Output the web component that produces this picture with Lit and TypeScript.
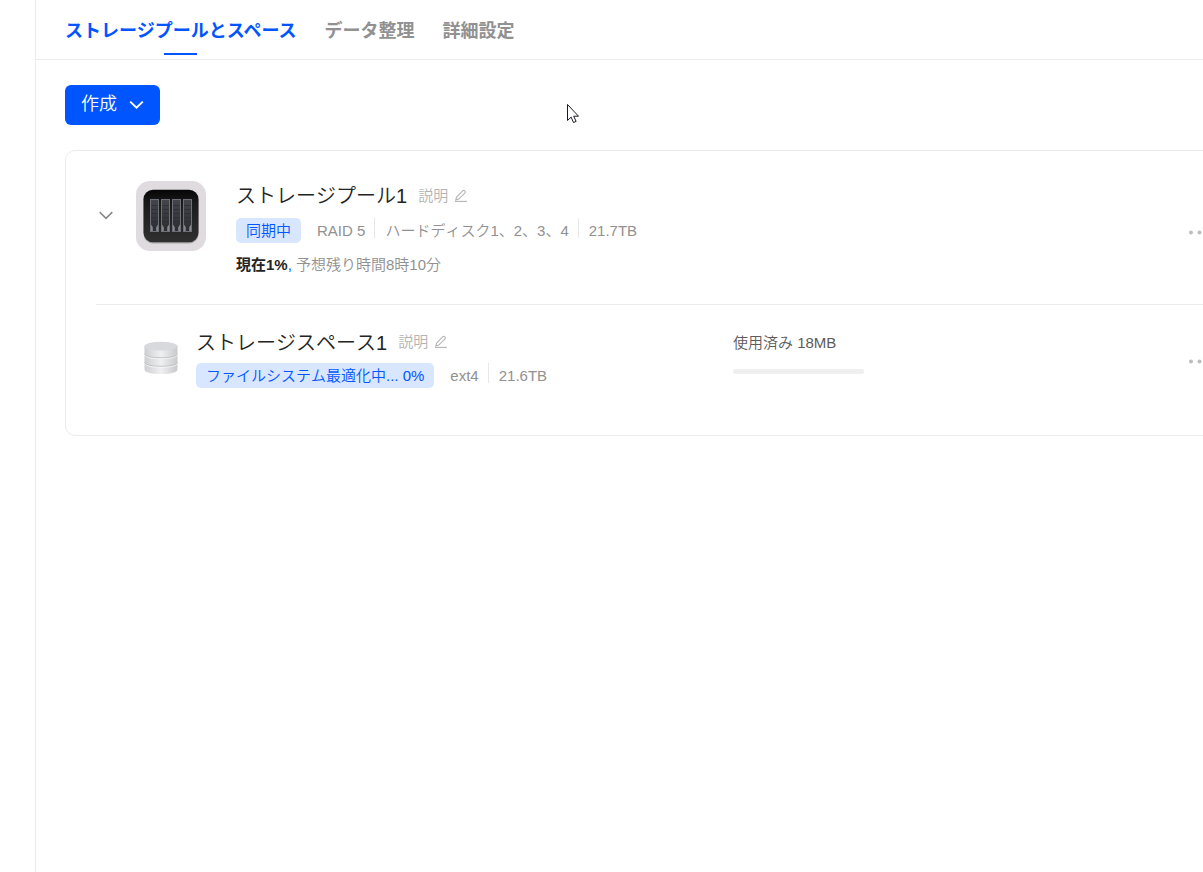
import { LitElement, html, css, svg, nothing } from "lit";
import { customElement, property, state } from "lit/decorators.js";
import { classMap } from "lit/directives/class-map.js";

const pencil = svg`
  <path d="M2.6 8.1 8.9 1.7a1.2 1.2 0 0 1 1.7 0l.4.4a1.2 1.2 0 0 1 0 1.7L4.8 10.1l-3 .8z" />
  <path d="M1 12.4h12" />
`;

@customElement("description-edit")
class DescriptionEdit extends LitElement {
  static styles = css`
    :host {
      display: inline-flex;
    }
    .edit {
      display: flex;
      align-items: center;
      gap: 6px;
      padding: 0;
      border: 0;
      background: none;
      color: #b4b4b4;
      font: inherit;
      line-height: 32px;
      cursor: pointer;
    }
    .pen {
      width: 14px;
      height: 14px;
      fill: none;
      stroke: currentColor;
      stroke-width: 1.1;
    }
  `;

  render() {
    return html`<button class="edit" type="button">
      説明<svg class="pen" viewBox="0 0 14 14" aria-hidden="true">${pencil}</svg>
    </button>`;
  }
}

@customElement("status-line")
class StatusLine extends LitElement {
  @property() status = "";
  @property({ attribute: false }) facts: string[] = [];

  static styles = css`
    :host {
      display: block;
    }
    .line {
      display: flex;
      height: 25px;
      line-height: 25px;
      color: #919191;
      white-space: nowrap;
    }
    .tag {
      padding: 0 10px;
      margin-right: 16px;
      border-radius: 5px;
      background: #d9e6ff;
      color: #0055ff;
    }
    .sep {
      width: 1px;
      height: 20px;
      margin: 0 10px 0 9px;
      background: #e8e8e8;
    }
  `;

  render() {
    return html`<div class="line">
      <span class="tag">${this.status}</span>
      ${this.facts.map(
        (fact, i) => html`${i ? html`<span class="sep"></span>` : nothing}<span>${fact}</span>`,
      )}
    </div>`;
  }
}

@customElement("more-button")
class MoreButton extends LitElement {
  static styles = css`
    :host {
      display: block;
    }
    .more {
      display: block;
      padding: 0;
      border: 0;
      background: none;
      cursor: pointer;
    }
    .dots {
      display: block;
      width: 22px;
      height: 22px;
      fill: #bdbdbd;
    }
  `;

  render() {
    return html`<button class="more" type="button" aria-label="その他">
      <svg class="dots" viewBox="0 0 22 22">
        <circle cx="3" cy="11.5" r="2" />
        <circle cx="11.5" cy="11.5" r="2" />
        <circle cx="20" cy="11.5" r="2" />
      </svg>
    </button>`;
  }
}

@customElement("app-root")
class AppRoot extends LitElement {
  @state() private active = 0;
  @state() private open = true;

  private tabs = ["ストレージプールとスペース", "データ整理", "詳細設定"];

  static styles = css`
    :host {
      display: block;
      overflow: hidden;
      background: #fff;
      font: 350 15px/30px "Liberation Sans", "Noto Sans CJK JP", sans-serif;
      font-kerning: none;
      color: #242424;
    }
    .page {
      min-height: 100vh;
      margin-left: 35px;
      border-left: 1px solid #ececec;
      box-sizing: border-box;
    }
    .tabs {
      display: flex;
      gap: 28px;
      height: 59px;
      padding-left: 29px;
      border-bottom: 1px solid #ececec;
    }
    .tab {
      display: flex;
      flex-direction: column;
      align-items: center;
      padding: 4px 0 0;
      border: 0;
      background: none;
      color: #919191;
      font: inherit;
      font-size: 18px;
      font-weight: 700;
      font-kerning: normal;
      line-height: 55px;
      height: 55px;
      box-sizing: border-box;
      white-space: nowrap;
      cursor: pointer;
    }
    .tab.on {
      color: #0055ff;
    }
    .tab.on::after {
      content: "";
      width: 33px;
      height: 2px;
      flex: none;
      margin-top: -6px;
      background: #0055ff;
    }
    .body {
      padding: 25px 0 0 29px;
      margin-right: -38px;
    }
    .create {
      display: flex;
      align-items: center;
      gap: 12px;
      height: 40px;
      padding: 0 16px 2px;
      border: 0;
      border-radius: 6px;
      background: #0055ff;
      color: #fff;
      font: inherit;
      font-size: 18px;
      cursor: pointer;
    }
    .caret {
      width: 15px;
      height: 15px;
      fill: none;
      stroke: currentColor;
      stroke-width: 2;
    }
    .card {
      margin-top: 25px;
      padding: 0 30px;
      border: 1px solid #ececec;
      border-radius: 10px;
    }
    .pool {
      display: flex;
      align-items: flex-start;
      padding: 30px 0 25px;
    }
    .toggle {
      width: 20px;
      height: 68px;
      padding: 0;
      margin-right: 20px;
      border: 0;
      background: none;
      color: #8a8a8a;
      cursor: pointer;
    }
    .arrow {
      display: block;
      margin: 0 auto;
      width: 16px;
      height: 16px;
      fill: none;
      stroke: currentColor;
      stroke-width: 1.6;
    }
    .bay {
      width: 70px;
      height: 70px;
      margin-right: 30px;
      flex: none;
    }
    .info {
      flex: 1;
      min-width: 0;
    }
    .head {
      display: flex;
      gap: 11px;
      height: 30px;
    }
    .name {
      margin: 0;
      font-size: 20px;
      font-weight: inherit;
      line-height: 30px;
      white-space: nowrap;
    }
    .space .name {
      line-height: 32px;
    }
    .status {
      margin-top: 6px;
    }
    .pool .status {
      margin-top: 7px;
    }
    .progress {
      margin: 7px 0 -1px;
      color: #919191;
    }
    .now {
      color: #242424;
      font-weight: 700;
    }
    .comma {
      color: #0055ff;
    }
    .space {
      display: flex;
      align-items: flex-start;
      padding: 22px 0 47px 48px;
      border-top: 1px solid #ececec;
    }
    .disk {
      width: 34px;
      height: 34px;
      margin: 14px 18px 0 0;
      flex: none;
    }
    .usage {
      flex: 0 0 455px;
      color: #5c5c5c;
    }
    .used {
      display: block;
      line-height: 32px;
    }
    .bar {
      width: 131px;
      height: 5px;
      margin-top: 10px;
      border-radius: 3px;
      background: #efefef;
    }
    .pool-more {
      padding-top: 40px;
    }
    .space-more {
      padding-top: 23px;
    }
    .pointer {
      position: absolute;
      left: 566px;
      top: 103px;
      width: 14px;
      height: 21px;
      pointer-events: none;
    }
  `;

  private bayIcon() {
    return html`<svg class="bay" viewBox="0 0 70 70" aria-hidden="true">
      <defs>
        <linearGradient id="box" x1="0" y1="0" x2="0" y2="1">
          <stop offset="0" stop-color="#050506" />
          <stop offset=".25" stop-color="#1a1a1b" />
          <stop offset="1" stop-color="#303031" />
        </linearGradient>
        <linearGradient id="slot" x1="0" y1="0" x2="0" y2="1">
          <stop offset="0" stop-color="#44464c" />
          <stop offset="1" stop-color="#2c2d31" />
        </linearGradient>
      </defs>
      <rect width="70" height="70" rx="14" fill="#dfdbde" />
      <rect x="7.5" y="9.5" width="55" height="53" rx="9.5" fill="#a9a6a9" />
      <rect x="7.5" y="8.8" width="55" height="52.4" rx="9.5" fill="url(#box)" />
      ${[14.5, 25.5, 36.5, 47.5].map(
        (x) => svg`<g transform="translate(${x} 18.5)">
          <rect width="8" height="32" fill="url(#slot)" stroke="#6d7078" stroke-width="1" />
          <path d="M1 6h6M1 10h6M1 14h6M1 18h6M1 22h6" stroke="#2c2e33" stroke-width=".8" />
          <path d="M.5 25v6.5h1.8v-3.7zM7.5 25v6.5H5.7v-3.7z" fill="#85888f" />
        </g>`,
      )}
    </svg>`;
  }

  private diskIcon() {
    return html`<svg class="disk" viewBox="0 0 34 34" aria-hidden="true">
      <defs>
        <linearGradient id="side">
          <stop offset="0" stop-color="#cdced1" />
          <stop offset=".5" stop-color="#f0f0f2" />
          <stop offset="1" stop-color="#c8c9cc" />
        </linearGradient>
      </defs>
      <path d="M.5 5v23q0 5 16.5 5t16.5-5V5z" fill="url(#side)" />
      ${[13, 21.5].map(
        (y) => svg`<path d="M.5 ${y}q2 3.8 16.5 3.8t16.5-3.8" fill="none" stroke="#c0c1c5" stroke-width="1" />
          <path d="M.5 ${y + 1}q2 3.8 16.5 3.8t16.5-3.8" fill="none" stroke="#f6f6f7" stroke-width=".8" />`,
      )}
      <ellipse cx="17" cy="5.2" rx="16.5" ry="4.4" fill="#d8d9dc" />
    </svg>`;
  }

  render() {
    return html`
      <main class="page">
        <nav class="tabs">
          ${this.tabs.map(
            (label, i) => html`<button
              type="button"
              class=${classMap({ tab: true, on: i === this.active })}
              @click=${() => (this.active = i)}
            >${label}</button>`,
          )}
        </nav>
        <div class="body">
          <button class="create" type="button">
            作成
            <svg class="caret" viewBox="0 0 15 15" aria-hidden="true"><path d="M1.2 4.6 7.5 10.6l6.3-6" /></svg>
          </button>
          <section class="card">
            <div class="pool">
              <button class="toggle" type="button" aria-label="展開" @click=${() => (this.open = !this.open)}>
                <svg class="arrow" viewBox="0 0 16 16"><path d="M1.7 5.1 8 11.3l6.3-6.2" /></svg>
              </button>
              ${this.bayIcon()}
              <div class="info">
                <div class="head">
                  <h2 class="name">ストレージプール1</h2>
                  <description-edit></description-edit>
                </div>
                <status-line
                  class="status"
                  status="同期中"
                  .facts=${["RAID 5", "ハードディスク1、2、3、4", "21.7TB"]}
                ></status-line>
                <p class="progress"><span class="now">現在1%</span><span class="comma">,</span> 予想残り時間8時10分</p>
              </div>
              <more-button class="pool-more"></more-button>
            </div>
            ${this.open
              ? html`<div class="space">
                  ${this.diskIcon()}
                  <div class="info">
                    <div class="head">
                      <h2 class="name">ストレージスペース1</h2>
                      <description-edit></description-edit>
                    </div>
                    <status-line
                      class="status"
                      status="ファイルシステム最適化中... 0%"
                      .facts=${["ext4", "21.6TB"]}
                    ></status-line>
                  </div>
                  <div class="usage">
                    <span class="used">使用済み 18MB</span>
                    <div class="bar"></div>
                  </div>
                  <more-button class="space-more"></more-button>
                </div>`
              : nothing}
          </section>
        </div>
      </main>
      <svg class="pointer" viewBox="0 0 14 21" aria-hidden="true">
        <path
          d="M1.5 1.5v16l3.6-3.4 2.4 5.4 2.6-1.1-2.4-5.2h4.8z"
          fill="#fff"
          stroke="#1a1a24"
          stroke-width="1"
        />
      </svg>
    `;
  }
}
